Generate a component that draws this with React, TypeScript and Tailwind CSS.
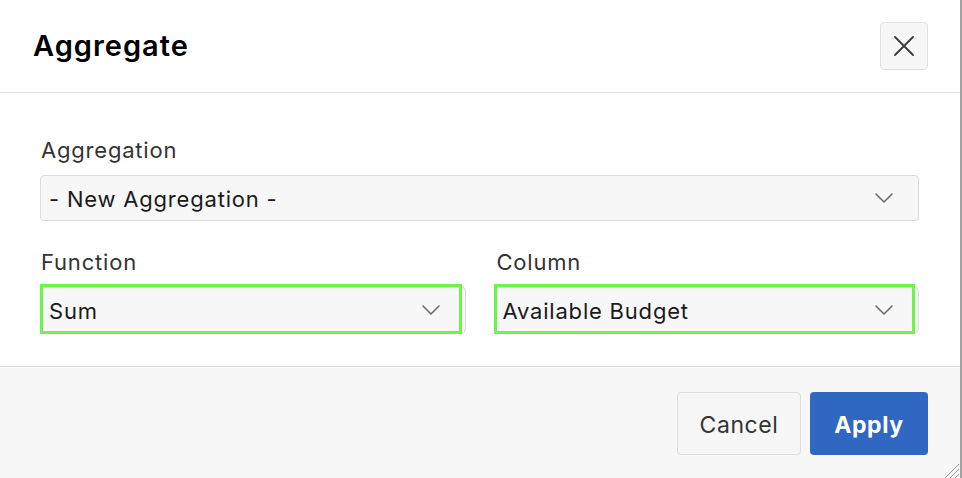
import React from 'react';

const Chevron: React.FC = () => (
    <svg width="20" height="12" viewBox="0 0 20 12" fill="none" className="shrink-0">
        <path d="M2 2l8 8 8-8" stroke="#6b6b6b" strokeWidth="1.6" strokeLinecap="round" strokeLinejoin="round" />
    </svg>
);

const Select: React.FC<{ value: string; highlight?: boolean }> = ({ value, highlight }) => (
    <div className="relative h-[46px]">
        <div className="flex h-full items-center justify-between rounded-[4px] border border-[#dcdcdc] bg-[#f7f7f7] pl-[8px] pr-[24px] text-[22px] tracking-[0.8px] text-[#1a1a1a]">
            <span className="pt-[2px]">{value}</span>
            <Chevron />
        </div>
        {highlight && (
            <div className="pointer-events-none absolute -top-[3px] -bottom-[1px] left-0 right-[4px] border-[3px] border-[#6ef24c]" />
        )}
    </div>
);

const App: React.FC = () => {
    return (
        <div className="flex h-[478px] w-[962px] bg-white" style={{ fontFamily: 'Inter, "Noto Sans", sans-serif' }}>
            <div className="relative flex w-[960px] flex-col">
                {/* Header */}
                <div className="flex h-[93px] items-center justify-between border-b border-[#e2e2e2] pl-[33px] pr-[32px]">
                    <h1 className="text-[29px] font-semibold tracking-[1px] text-black">Aggregate</h1>
                    <button className="flex h-[48px] w-[48px] items-center justify-center rounded-[4px] border border-[#e2e2e2] bg-[#f6f6f6]">
                        <svg width="22" height="22" viewBox="0 0 22 22" fill="none">
                            <path d="M2 2l18 18M20 2L2 20" stroke="#3a3a3a" strokeWidth="1.8" strokeLinecap="round" />
                        </svg>
                    </button>
                </div>

                {/* Body */}
                <div className="flex h-[273px] flex-col pl-[40px] pr-[41px] pt-[44px]">
                    <label className="mb-[12px] pl-[1px] text-[22px] leading-[26px] tracking-[0.8px] text-[#333]">Aggregation</label>
                    <Select value="- New Aggregation -" />
                    <div className="mt-[28px] grid grid-cols-2 gap-[28px]">
                        <div className="flex flex-col">
                            <label className="mb-[12px] pl-[1px] text-[22px] leading-[26px] tracking-[0.8px] text-[#333]">Function</label>
                            <Select value="Sum" highlight />
                        </div>
                        <div className="flex flex-col">
                            <label className="mb-[12px] pl-[3px] text-[22px] leading-[26px] tracking-[0.8px] text-[#333]">Column</label>
                            <Select value="Available Budget" highlight />
                        </div>
                    </div>
                </div>

                {/* Footer */}
                <div className="flex flex-1 items-start justify-end gap-[9px] border-t border-[#dedede] bg-[#f7f7f7] pr-[32px] pt-[25px]">
                    <button className="h-[63px] w-[124px] rounded-[4px] border border-[#dedede] bg-[#f6f6f6] pt-[3px] text-[23px] tracking-[0.6px] text-[#333]">
                        Cancel
                    </button>
                    <button className="h-[63px] w-[118px] rounded-[4px] bg-[#2f67c2] pt-[3px] text-[23px] font-bold tracking-[0.6px] text-white">
                        Apply
                    </button>
                </div>

                {/* resize grip */}
                <svg className="absolute bottom-0 right-0" width="20" height="18" viewBox="0 0 20 18">
                    <path d="M19 4L5 18M19 9L10 18M19 14L15 18" stroke="#9a9a9a" strokeWidth="1" />
                </svg>
            </div>
            <div className="w-[2px] bg-[#a3a3a3]" />
        </div>
    );
};

export default App;
